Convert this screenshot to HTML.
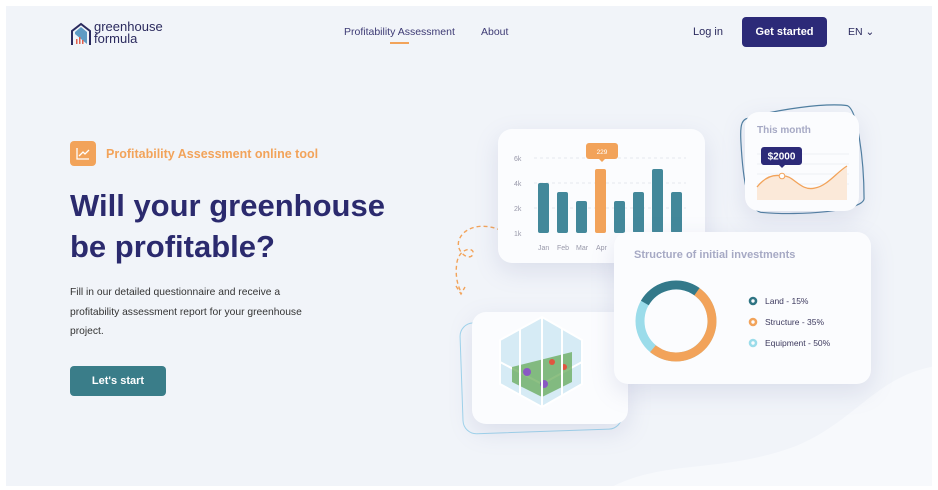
<!DOCTYPE html>
<html><head><meta charset="utf-8"><style>
*{margin:0;padding:0;box-sizing:border-box}
body{width:938px;height:490px;background:#fff;font-family:"Liberation Sans",sans-serif;position:relative;overflow:hidden}
.bg{position:absolute;left:6px;top:6px;width:926px;height:480px;background:#f1f4f9;overflow:hidden}
.a{position:absolute}
.card{position:absolute;background:#fbfcfe;border-radius:14px;box-shadow:0 8px 24px rgba(120,130,180,.18)}
.nav{font-size:10.5px;color:#3d3a74}
</style></head><body>
<div class="bg">
<svg class="a" style="left:590px;top:360px" width="340" height="130"><path d="M0 130 C60 90 120 110 200 80 C260 55 280 10 340 0 L340 130Z" fill="#f7f9fc"/></svg>
</div>
<!-- logo -->
<svg class="a" style="left:70px;top:22px" width="22" height="24" viewBox="0 0 22 24"><path d="M2 23V9L11 2L20 9V23" fill="none" stroke="#2b2a5e" stroke-width="2"/><path d="M5 10L11 5L17 10V22L5 12Z" fill="#5f9bc4"/><rect x="6" y="17" width="1.5" height="5" fill="#e0604e"/><rect x="9" y="15" width="1.5" height="7" fill="#e0604e"/><rect x="12" y="18" width="1.5" height="4" fill="#e0604e"/></svg>
<div class="a" style="left:94px;top:21px;font-size:13px;line-height:12px;color:#2b2a5e">greenhouse<br>formula</div>
<div class="a nav" style="left:344px;top:26px">Profitability Assessment</div>
<div class="a" style="left:390px;top:42px;width:19px;height:2px;background:#f2a35a"></div>
<div class="a nav" style="left:481px;top:26px">About</div>
<div class="a" style="left:693px;top:26px;font-size:11px;color:#2b2a5e">Log in</div>
<div class="a" style="left:742px;top:17px;width:85px;height:30px;background:#2c2a78;border-radius:4px;color:#fff;font-size:11px;font-weight:bold;text-align:center;line-height:30px">Get started</div>
<div class="a" style="left:848px;top:26px;font-size:10.5px;color:#2b2a5e">EN &#8964;</div>
<!-- hero -->
<div class="a" style="left:70px;top:141px;width:26px;height:25px;background:#f2a35a;border-radius:4px"><svg width="26" height="25"><path d="M7 7V18H19M9 15L13 11L15 13L19 9" fill="none" stroke="#fff" stroke-width="1.3"/></svg></div>
<div class="a" style="left:106px;top:147px;font-size:12.5px;font-weight:bold;color:#f2a35a">Profitability Assessment online tool</div>
<div class="a" style="left:70px;top:185px;font-size:31px;line-height:41px;font-weight:bold;color:#2b2a6e">Will your greenhouse<br>be profitable?</div>
<div class="a" style="left:70px;top:283px;font-size:10.3px;line-height:19.5px;color:#333">Fill in our detailed questionnaire and receive a<br>profitability assessment report for your greenhouse<br>project.</div>
<div class="a" style="left:70px;top:366px;width:96px;height:30px;background:#3a7d89;border-radius:4px;color:#fff;font-size:11px;font-weight:bold;text-align:center;line-height:30px">Let's start</div>
<!-- dashed arrow -->
<svg class="a" style="left:445px;top:222px" width="65" height="75"><path d="M62 12C45 0 20 2 14 18C10 30 25 40 28 32C30 25 15 25 12 40C10 52 12 62 16 70M11 64L16 72L20 65" fill="none" stroke="#f2a35a" stroke-width="1.4" stroke-dasharray="4 3"/></svg>
<!-- bar card -->
<div class="card" style="left:498px;top:129px;width:207px;height:134px">
<svg width="207" height="134" style="font-family:'Liberation Sans';font-size:7px;fill:#99a">
<text x="16" y="32">6k</text><text x="16" y="57">4k</text><text x="16" y="82">2k</text><text x="16" y="107">1k</text>
<g stroke="#e6e8ee" stroke-dasharray="3 3"><line x1="36" y1="29" x2="188" y2="29"/><line x1="36" y1="54" x2="188" y2="54"/><line x1="36" y1="79" x2="188" y2="79"/></g>
<g fill="#43889a"><rect x="40" y="54" width="11" height="50" rx="2"/><rect x="59" y="63" width="11" height="41" rx="2"/><rect x="78" y="72" width="11" height="32" rx="2"/><rect x="116" y="72" width="11" height="32" rx="2"/><rect x="135" y="63" width="11" height="41" rx="2"/><rect x="154" y="40" width="11" height="64" rx="2"/><rect x="173" y="63" width="11" height="41" rx="2"/></g>
<rect x="97" y="40" width="11" height="64" rx="2" fill="#f2a35a"/>
<rect x="88" y="14" width="32" height="16" rx="3" fill="#f2a35a"/><path d="M101 30l3 3 3-3z" fill="#f2a35a"/>
<text x="104" y="25" fill="#fff" text-anchor="middle" font-size="6.5">229</text>
<text x="40" y="121">Jan</text><text x="59" y="121">Feb</text><text x="78" y="121">Mar</text><text x="98" y="121">Apr</text>
</svg></div>
<!-- this month -->
<svg class="a" style="left:738px;top:102px" width="130" height="118"><path d="M10 14C40 6 90 2 112 6C122 10 126 60 124 100C122 112 60 114 20 108C8 104 4 80 4 36C4 20 6 16 10 14Z" fill="none" stroke="#4f7fa0" stroke-width="1.2" transform="rotate(-3 65 59)"/></svg>
<div class="card" style="left:745px;top:112px;width:114px;height:99px">
<svg width="114" height="99" style="font-family:'Liberation Sans'">
<text x="12" y="21" font-size="10" font-weight="bold" fill="#a6a9c4">This month</text>
<g stroke="#eef0f4"><line x1="12" y1="42" x2="104" y2="42"/><line x1="12" y1="52" x2="104" y2="52"/><line x1="12" y1="62" x2="104" y2="62"/><line x1="12" y1="72" x2="104" y2="72"/></g>
<path d="M12 75C20 65 28 62 37 64C48 62 55 80 70 76C82 74 92 60 102 54L102 88L12 88Z" fill="#fbe9d9"/>
<path d="M12 75C20 65 28 62 37 64C48 62 55 80 70 76C82 74 92 60 102 54" fill="none" stroke="#f2a35a" stroke-width="1.3"/>
<circle cx="37" cy="64" r="2.8" fill="#fff" stroke="#f2a35a"/>
<rect x="16" y="35" width="41" height="18" rx="3" fill="#2c2a78"/><path d="M34 53l3 3 3-3z" fill="#2c2a78"/>
<text x="36.5" y="47.5" text-anchor="middle" font-size="10" font-weight="bold" fill="#fff">$2000</text>
</svg></div>
<!-- greenhouse card -->
<div class="a" style="left:461px;top:320px;width:160px;height:112px;border:1px solid #9fd4ec;border-radius:14px;transform:rotate(-2deg)"></div>
<div class="card" style="left:472px;top:312px;width:156px;height:112px">
<svg width="156" height="112"><path d="M28 28L70 5L110 28L110 72L70 95L28 72Z" fill="#d6ebf5" stroke="#fff" stroke-width="2"/><path d="M28 50L70 72L110 50" fill="none" stroke="#fff" stroke-width="2"/><path d="M40 55L100 40L100 70L70 85L40 70Z" fill="#5ea54f" opacity=".7"/><circle cx="55" cy="60" r="4" fill="#8a58c4"/><circle cx="72" cy="72" r="4" fill="#8a58c4"/><circle cx="80" cy="50" r="3" fill="#e05540"/><circle cx="92" cy="55" r="3" fill="#e05540"/><path d="M70 5V95M48 17V84M90 16V84" stroke="#fff" stroke-width="2"/></svg></div>
<!-- structure card -->
<div class="card" style="left:614px;top:232px;width:257px;height:152px">
<svg width="257" height="152" style="font-family:'Liberation Sans'">
<text x="20" y="26" font-size="11" font-weight="bold" fill="#a6a9c4">Structure of initial investments</text>
<g fill="none" stroke-width="9" transform="translate(62,89)">
<circle r="36" stroke="#9bdcea"/>
<circle r="36" stroke="#f2a35a" stroke-dasharray="116 230" transform="rotate(-55)"/>
<circle r="36" stroke="#33798a" stroke-dasharray="60 230" transform="rotate(-150)"/>
</g>
<g stroke-width="2.6" fill="none"><circle cx="139" cy="69" r="3" stroke="#2f7483"/><circle cx="139" cy="90" r="3" stroke="#f2a35a"/><circle cx="139" cy="111" r="3" stroke="#9bdcea"/></g>
<g font-size="8.5" fill="#3d3a5e"><text x="151" y="72">Land - 15%</text><text x="151" y="93">Structure - 35%</text><text x="151" y="114">Equipment - 50%</text></g>
</svg></div>
</body></html>
